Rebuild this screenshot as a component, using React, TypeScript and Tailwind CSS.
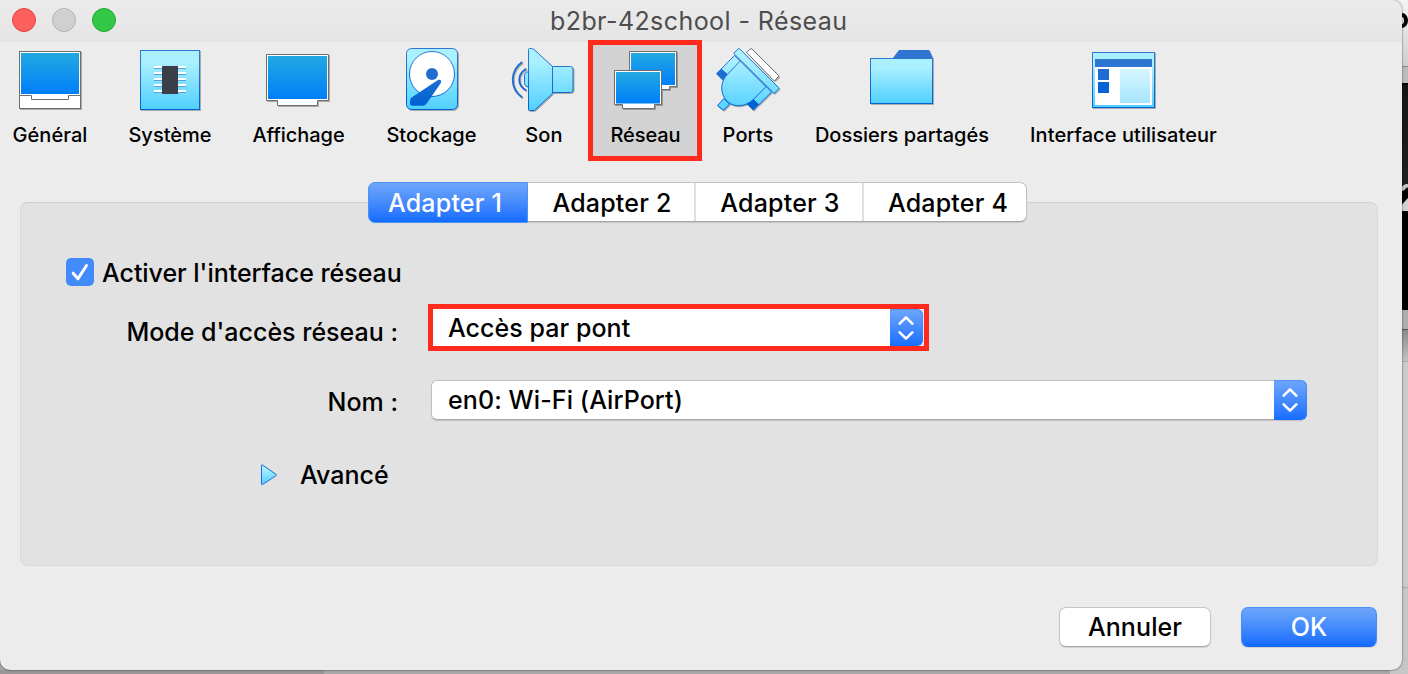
import React from "react";

function Defs() {
  return (
    <svg width="0" height="0" className="absolute">
      <defs>
        <linearGradient id="screen" x1="0" y1="0" x2="0" y2="1">
          <stop offset="0" stopColor="#22a9e1" />
          <stop offset="1" stopColor="#007ffa" />
        </linearGradient>
        <linearGradient id="aqua" x1="0" y1="0" x2="0" y2="1">
          <stop offset="0.2" stopColor="#abf0ff" />
          <stop offset="1" stopColor="#4fcfff" />
        </linearGradient>
        <linearGradient id="aquaAll" gradientUnits="userSpaceOnUse" x1="0" y1="0" x2="0" y2="64">
          <stop offset="0.2" stopColor="#abf0ff" />
          <stop offset="1" stopColor="#4fcfff" />
        </linearGradient>
        <linearGradient id="edge" gradientUnits="userSpaceOnUse" x1="0" y1="0" x2="0" y2="64">
          <stop offset="0.2" stopColor="#2f76d2" />
          <stop offset="0.9" stopColor="#0062d2" />
        </linearGradient>
        <linearGradient id="pane" x1="0" y1="0" x2="0" y2="1">
          <stop offset="0" stopColor="#d6f6fe" />
          <stop offset="1" stopColor="#a6e6ff" />
        </linearGradient>
      </defs>
    </svg>
  );
}

function Icon({ children }: { children: React.ReactNode }) {
  return (
    <svg
      width="64"
      height="64"
      viewBox="0 0 64 64"
      fill="none"
      className="shrink-0 overflow-visible drop-shadow-[1px_1px_0px_rgba(0,0,0,0.28)]"
    >
      {children}
    </svg>
  );
}

const GeneralIcon = () => (
  <Icon>
    <rect x="1.5" y="3.5" width="61" height="57" fill="#fff" stroke="#6e6e6e" />
    <rect x="3" y="5" width="58" height="41" fill="url(#screen)" />
    <path d="M1.5 47.5H13.5V51.5H50.5V47.5H62.5" stroke="#6e6e6e" />
  </Icon>
);

const SystemIcon = () => (
  <Icon>
    <rect x="2.5" y="2.5" width="59" height="59" fill="url(#aqua)" stroke="url(#edge)" />
    {[18, 24, 30, 36, 42].map((y) => (
      <g key={y}>
        <rect x="16" y={y} width="32" height="2" fill="#fff" />
        <rect x="16" y={y + 2} width="32" height="1" fill="#5b9fd8" />
      </g>
    ))}
    <rect x="24" y="18" width="16" height="28" fill="#393e48" />
  </Icon>
);

const DisplayIcon = () => (
  <Icon>
    <path d="M0.5 6.5H62.5V52.5H51.5V57.5H11.5V52.5H0.5Z" fill="#fff" stroke="#6e6e6e" />
    <rect x="2" y="8" width="59" height="43" fill="url(#screen)" />
  </Icon>
);

const StorageIcon = () => (
  <Icon>
    <rect x="6.5" y="0.5" width="51" height="61" rx="5" fill="url(#aqua)" stroke="url(#edge)" />
    <circle cx="32" cy="26" r="22.5" fill="#fff" stroke="url(#edge)" />
    <circle cx="32" cy="26" r="6" fill="#1f6dd2" />
    <path
      d="M37.6 32.2C40 31 42.2 32.5 40.8 35L26.5 55.8Q25 57.8 22.5 57.8H12.5Q10 57.8 10 55.3V53Q10 50.5 12 49.3Z"
      fill="url(#edge)"
    />
  </Icon>
);

const SoundIcon = () => (
  <Icon>
    <path d="M16.5 24H15.5C13.5 24 12.5 26 12.5 28V34.5C12.5 37 13.5 38.5 15.5 38.5H16.5Z" fill="url(#aquaAll)" stroke="url(#edge)" />
    <path d="M40.5 18.5H58.5Q61 18.5 61 21V42Q61 44.5 58.5 44.5H40.5Z" fill="url(#aquaAll)" stroke="url(#edge)" />
    <path d="M16.5 1.5Q16.5 0.5 17.5 0.5H19.5Q21 0.5 22 1.5L40.5 18.5V45.5L23.5 61.5Q22.3 62.5 21 62.5H17.5Q16.5 62.5 16.5 61.5Z" fill="url(#aquaAll)" stroke="url(#edge)" />
    <path d="M10.2 14C-2.4 23 -2.4 40.5 10.2 49.5" stroke="#1c6bd0" strokeWidth="1.9" />
    <path d="M14.2 20.7C5 26 5 37.5 14.2 42.3" stroke="#1c6bd0" strokeWidth="1.9" />
  </Icon>
);

const NetworkIcon = () => (
  <Icon>
    <path d="M16.5 3.5H63.5V38.5H56.5V41.5H24.5V38.5H16.5Z" fill="#fff" stroke="#6e6e6e" />
    <rect x="18" y="5" width="44" height="32" fill="url(#screen)" />
    <path d="M1.5 22.5H48.5V56.5H41.5V60.5H9.5V56.5H1.5Z" fill="#fff" stroke="#6e6e6e" />
    <rect x="3" y="24" width="44" height="31.5" fill="url(#screen)" />
  </Icon>
);

const PortsIcon = () => (
  <Icon>
    <path d="M30.7 4.5L34.2 1Q35 0.3 36 1L62.3 27.2Q63 28 62.3 28.8L58.3 33Z" fill="#fff" stroke="#6e6e6e" />
    <path d="M7.8 50.5L13.6 56.1L7.4 62.3L1.5 57.6Z" fill="url(#aquaAll)" stroke="url(#edge)" />
    <path d="M18.5 7.5L5 21.2L11.5 27.3L25 14Z" fill="url(#aquaAll)" stroke="url(#edge)" />
    <path d="M5.2 21L0.5 25.7L6.5 31.7L11.6 26.8Z" fill="#1f6dd2" stroke="#1f6dd2" />
    <path d="M49.3 37.7L55.6 44L42.5 57L36.3 50.5Z" fill="url(#aquaAll)" stroke="url(#edge)" />
    <path d="M36.6 50.6L42.5 56.5L37.4 62.1L31.6 56.5Z" fill="#0062d2" stroke="#0062d2" />
    <path d="M24.3 13L50 38.7L37 51.8C30 58.5 18.5 60.2 11.4 53.5C3.6 46 4.2 34 11 26.8Z" fill="url(#aquaAll)" stroke="url(#edge)" />
    <path d="M17.7 5.3L22.2 0.9Q23 0.3 23.8 1L62.6 39.6Q63.3 40.3 62.6 41L58 45.5Z" fill="url(#aquaAll)" stroke="url(#edge)" />
  </Icon>
);

const FolderIcon = () => (
  <Icon>
    <path d="M22.5 10.5L29 2H59.2L63 10.5Z" fill="#2f76d2" />
    <rect x="0.5" y="10.5" width="62" height="45" fill="url(#aqua)" stroke="url(#edge)" />
  </Icon>
);

const InterfaceIcon = () => (
  <Icon>
    <rect x="0.5" y="4.5" width="62" height="55" fill="url(#aqua)" stroke="url(#edge)" />
    <rect x="3" y="11" width="57" height="8" fill="#2f76d2" />
    <rect x="3" y="19" width="57" height="38" fill="#fff" />
    <rect x="6" y="21" width="11" height="11" fill="#1f6dd2" />
    <rect x="6" y="34" width="11" height="11" fill="#0664d4" />
    <rect x="28" y="21" width="30" height="34" fill="url(#pane)" />
  </Icon>
);

const tools = [
  { label: "Général", Icon: GeneralIcon, box: "w-[100px]", text: "tracking-[0.05px]" },
  { label: "Système", Icon: SystemIcon, box: "w-[140px]", text: "tracking-[0px]" },
  { label: "Affichage", Icon: DisplayIcon, box: "w-[116px]", text: "tracking-[-0.05px] pl-px" },
  { label: "Stockage", Icon: StorageIcon, box: "w-[152px]", text: "tracking-[0.05px] pr-px" },
  { label: "Son", Icon: SoundIcon, box: "mr-2 w-[72px]", text: "tracking-[0.1px]" },
  { label: "Réseau", Icon: NetworkIcon, box: "w-[114px]", text: "tracking-[-0.1px] pl-px", active: true },
  { label: "Ports", Icon: PortsIcon, box: "w-[92px]", text: "tracking-[0.1px]" },
  { label: "Dossiers partagés", Icon: FolderIcon, box: "w-[216px]", text: "tracking-[0.02px]" },
  { label: "Interface utilisateur", Icon: InterfaceIcon, box: "w-[228px]", text: "tracking-[0.07px] pr-px" },
];

function Stepper() {
  return (
    <span className="flex w-[33px] shrink-0 items-center justify-center self-stretch rounded-r-[6px] bg-linear-to-b from-[#6ea6fa] to-[#146cff] pr-px shadow-[inset_-1px_1px_0_rgba(50,130,250,0.5)]">
      <svg width="16" height="26" viewBox="0 0 16 26" fill="none" stroke="#fff" strokeWidth="2.6" strokeLinecap="round" strokeLinejoin="round">
        <path d="M1.7 8.6L8 2.3L14.3 8.6M1.7 17.4L8 23.7L14.3 17.4" />
      </svg>
    </span>
  );
}

export default function App() {
  return (
    <div className="relative h-[674px] w-[1408px] overflow-hidden bg-[#a9a8a8] font-['Inter','Liberation_Sans',sans-serif] text-black">
      <Defs />
      <div className="absolute bottom-0 left-0 h-1 w-[324px] bg-[#979595]" />
      {/* windows behind the dialog */}
      <div className="absolute right-0 top-0 flex h-full w-[18px] flex-col">
        <div className="relative h-[66px] overflow-hidden bg-linear-to-b from-[#f4f4f4] to-[#d0d0d0]">
          <svg width="6" height="20" viewBox="0 0 6 20" className="absolute right-0 top-[10px]">
            <ellipse cx="0" cy="10.5" rx="4" ry="5.6" fill="none" stroke="#000" strokeWidth="4" />
          </svg>
        </div>
        <div className="h-[17px] border-t border-[#888] bg-[#bcbcbc]" />
        <div className="relative h-[128px] overflow-hidden border-t-2 border-black bg-linear-to-b from-[#151515] to-[#222]">
          <svg width="6" height="27" viewBox="0 0 6 27" className="absolute bottom-0 right-0">
            <path d="M0 9Q0.5 2 6 1.5" fill="none" stroke="#c8c8c8" strokeWidth="3.6" />
            <path d="M6 5V14L0 20.5V7Z" fill="#000" />
            <path d="M6 14V27H0V20.5Z" fill="#d0d0d0" />
          </svg>
        </div>
        <div className="h-[99px] bg-black" />
        <div className="h-[19px] bg-[#adadad]" />
        <div className="h-[32px] border-t border-[#555] bg-linear-to-b from-[#8a8a8a] to-[#c2c2c2]" />
        <div className="h-[226px] border-t border-[#aaa] bg-[#cacaca]" />
        <div className="flex-1 border-t border-[#aaa] bg-[#c6c6c6]" />
      </div>

      <div className="relative flex h-[670px] w-[1402px] flex-col rounded-b-[10px] rounded-tr-[10px] bg-[#ececec] shadow-[0_0_2px_rgba(0,0,0,0.75)]">
        <header className="flex h-[42px] shrink-0 items-center rounded-tr-[10px] bg-linear-to-b from-[#ebebeb] to-[#e5e5e5] pl-3">
          <div className="flex w-[104px] gap-4 pb-[2px]">
            <span className="size-6 rounded-full border border-[#e2463f] bg-[#fc605b]" />
            <span className="size-6 rounded-full border border-[#b4b4b4] bg-[#d0d0d0]" />
            <span className="size-6 rounded-full border border-[#24a934] bg-[#33c748]" />
          </div>
          <h1 className="flex-1 pl-[434px] text-[25px] leading-[42px] tracking-[0.42px] text-[#4d4d4d]">
            <span>b2br-42school - Réseau</span>
          </h1>
        </header>

        <nav className="flex h-[119px] shrink-0">
          {tools.map(({ label, Icon: Glyph, box, text, active }) => (
            <button
              key={label}
              className={`flex shrink-0 flex-col items-center ${box} ${
                active ? "-mt-[2px] h-[121px] border-[5px] border-[#fe2a1d] bg-[#d3d3d3] pt-[3px]" : "pt-[6px]"
              }`}
            >
              <Glyph />
              <span className={`mt-[11px] whitespace-nowrap text-[20px] font-medium leading-6 ${text}`}>{label}</span>
            </button>
          ))}
        </nav>

        <div className="relative z-10 -mb-[20px] ml-[368px] mt-[21px] flex h-[40px] w-[659px] shrink-0 rounded-[7px] border border-[#c2c2c2] border-b-[#a5a5a5] bg-white text-[25px] font-[450] leading-[41px] tracking-[0.2px] shadow-[0_1px_1px_rgba(0,0,0,0.12)]">
          <button className="-mt-px -mb-[2px] -ml-px w-[160px] rounded-l-[7px] border border-[#4794f5] bg-linear-to-b from-[#6fa6f9] to-[#126bff] pr-[6px] text-white">Adapter 1</button>
          <button className="w-[168px] border-r-2 border-[#e0e0e0] pl-[2px]">Adapter 2</button>
          <button className="w-[168px] border-r-2 border-[#e0e0e0] pl-[2px]">Adapter 3</button>
          <button className="flex-1 pl-[6px]">Adapter 4</button>
        </div>

        <main className="mx-5 flex h-[364px] w-[1358px] shrink-0 flex-col rounded-[8px] border border-[#d9d9d9] border-t-[#cfcfcf] bg-[#e2e2e2] text-[25px] font-[450] leading-[40px]">
          <label className="ml-[45px] mt-[49px] flex h-[40px] items-center">
            <span className="mr-[8px] flex size-7 items-center justify-center rounded-[5px] bg-[#438afd]">
              <svg width="28" height="28" viewBox="0 0 28 28" fill="none" stroke="#fff" strokeWidth="3" strokeLinecap="round" strokeLinejoin="round">
                <path d="M7.2 15.2L12 20.8L20.5 7.5" />
              </svg>
            </span>
            <span className="pt-[2px] tracking-[-0.04px]">Activer l'interface réseau</span>
          </label>
          <div className="mt-[12px] flex h-[47px]">
            <span className="mr-[30px] mt-[8px] w-[377px] text-right"><span>Mode d'accès réseau :</span></span>
            <span className="flex w-[501px] border-[5px] border-[#fe2a1d] bg-[#e8e8e8] pr-px">
              <span className="flex-1 bg-white pl-[15px] leading-[38px]"><span className="tracking-[0.05px]">Accès par pont</span></span>
              <Stepper />
            </span>
          </div>
          <div className="mt-[29px] flex h-[40px]">
            <span className="mr-[33px] mt-[2px] w-[377px] text-right"><span>Nom :</span></span>
            <span className="flex w-[876px] rounded-[6px] bg-white shadow-[0_1px_1px_rgba(0,0,0,0.15)]">
              <span className="flex-1 rounded-l-[6px] border border-r-0 border-[#c0c0c0] border-b-[#a5a5a5] pl-[16px] leading-[38px]"><span className="tracking-[0.1px]">en0: Wi-Fi (AirPort)</span></span>
              <Stepper />
            </span>
          </div>
          <div className="ml-[240px] mt-[35px] flex h-[40px] items-center">
            <svg width="16" height="22" viewBox="0 0 16 22" className="mb-[1px] mr-[23px]">
              <path d="M0.5 1.5Q0.5 0.5 1.5 1L15 10.3Q15.8 11 15 11.7L1.5 20.5Q0.5 21 0.5 20Z" fill="url(#aqua)" stroke="#1c6bd0" />
            </svg>
            <span>Avancé</span>
          </div>
        </main>

        <footer className="mt-[41px] flex justify-end gap-[30px] pr-[25px] text-[25px] font-[450] leading-[39px]">
          <button className="h-[40px] w-[152px] rounded-[7px] border border-[#c4c4c4] border-b-[#a5a5a5] bg-white tracking-[0.1px] shadow-[0_1px_1px_rgba(0,0,0,0.12)]">Annuler</button>
          <button className="h-[40px] w-[136px] rounded-[7px] border border-[#4a8ff8] border-b-[#1468f5] bg-linear-to-b from-[#6ea6fa] to-[#126bff] text-white shadow-[0_1px_1px_rgba(0,0,0,0.12)]">OK</button>
        </footer>
      </div>
    </div>
  );
}
